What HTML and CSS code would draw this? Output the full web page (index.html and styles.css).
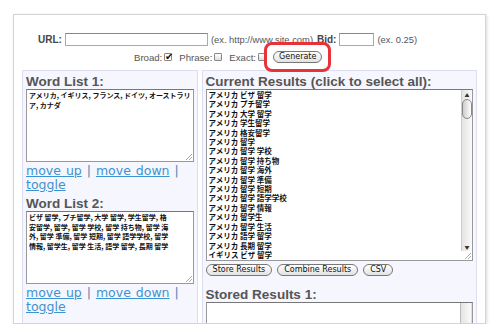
FILE: index.html
```html
<!DOCTYPE html>
<html lang="ja">
<head>
  <meta charset="UTF-8">
  <title>Keyword Generator</title>
  <link rel="stylesheet" href="styles.css">
</head>
<body>
  <div class="card">
    <!-- Formulario superior -->
    <div class="form">
      <div class="row row-url">
        <label class="strong">URL:</label>
        <span class="field field-url"></span>
        <span class="hint">(ex. http://www.site.com)</span>
        <label class="strong bid">Bid:</label>
        <span class="field field-bid"></span>
        <span class="hint">(ex. 0.25)</span>
      </div>
      <div class="row row-match">
        <span>Broad:</span><span class="check checked">&#10004;</span>
        <span>Phrase:</span><span class="check"></span>
        <span>Exact:</span><span class="check"></span>
        <span class="highlight"><button class="pill">Generate</button></span>
      </div>
    </div>

    <div class="columns">
      <!-- Listas de palabras -->
      <div class="panel panel-left">
        <h3>Word List 1:</h3>
        <div class="box words">アメリカ, イギリス, フランス, ドイツ, オーストラリ<br>ア, カナダ<span class="grip"></span></div>
        <div class="links"><a href="#">move up</a> | <a href="#">move down</a> | <a href="#">toggle</a></div>

        <h3>Word List 2:</h3>
        <div class="box words">ビザ 留学, プチ留学, 大学 留学, 学生留学, 格<br>安留学, 留学, 留学 学校, 留学 持ち物, 留学 海<br>外, 留学 準備, 留学 短期, 留学 語学学校, 留学<br>情報, 留学生, 留学 生活, 語学 留学, 長期 留学<span class="grip"></span></div>
        <div class="links"><a href="#">move up</a> | <a href="#">move down</a> | <a href="#">toggle</a></div>
      </div>

      <!-- Resultados -->
      <div class="panel panel-right">
        <h3>Current Results (click to select all):</h3>
        <div class="box results">
          <div class="lines">
            <div>アメリカ ビザ 留学</div>
            <div>アメリカ プチ留学</div>
            <div>アメリカ 大学 留学</div>
            <div>アメリカ 学生留学</div>
            <div>アメリカ 格安留学</div>
            <div>アメリカ 留学</div>
            <div>アメリカ 留学 学校</div>
            <div>アメリカ 留学 持ち物</div>
            <div>アメリカ 留学 海外</div>
            <div>アメリカ 留学 準備</div>
            <div>アメリカ 留学 短期</div>
            <div>アメリカ 留学 語学学校</div>
            <div>アメリカ 留学 情報</div>
            <div>アメリカ 留学生</div>
            <div>アメリカ 留学 生活</div>
            <div>アメリカ 語学 留学</div>
            <div>アメリカ 長期 留学</div>
            <div>イギリス ビザ 留学</div>
          </div>
          <div class="scrollbar">
            <span class="arrow">&#9650;</span>
            <span class="thumb"></span>
            <span class="track"></span>
            <span class="arrow">&#9660;</span>
          </div>
          <span class="grip"></span>
        </div>
        <div class="buttons">
          <button class="pill">Store Results</button>
          <button class="pill">Combine Results</button>
          <button class="pill">CSV</button>
        </div>

        <h3 class="stored">Stored Results 1:</h3>
        <div class="box stored-box">
          <div class="lines"></div>
          <div class="scrollbar empty"></div>
        </div>
      </div>
    </div>
  </div>
</body>
</html>
```

FILE: styles.css
```css
/* Estilo general */
body {
  margin: 0;
  padding: 0;
  background: #fff;
  font-family: 'Liberation Sans', Arial, sans-serif;
  color: #333;
}

.card {
  margin: 14px 0 0 13px;
  width: 471px;
  height: 308px;
  border: 1px solid #d4d4d4;
  box-shadow: 1px 1px 3px rgba(0, 0, 0, 0.15);
  display: flex;
  flex-direction: column;
  overflow: hidden;
}

/* Formulario */
.form {
  flex-shrink: 0;
  padding-top: 17px;
  height: 38px;
}

.row {
  display: flex;
  align-items: center;
}

.row-url {
  padding-left: 24px;
  height: 14px;
}

.strong {
  font-weight: bold;
  color: #444;
  font-size: 10px;
  margin-right: 3px;
}

.bid {
  margin-left: 1px;
}

.field {
  height: 11px;
  border: 1px solid #aaa;
  border-top-color: #888;
  background: #fff;
  margin-right: 3px;
}

.field-url {
  width: 141px;
}

.field-bid {
  width: 33px;
}

.hint {
  color: #555;
  font-size: 9.4px;
  margin-right: 3px;
}

.row-match {
  padding-left: 120px;
  margin-top: 4px;
  height: 14px;
  color: #555;
  font-size: 9.6px;
}

.check {
  display: inline-block;
  width: 6px;
  height: 6px;
  border: 1px solid #888;
  border-radius: 1px;
  margin: 0 7px 0 2px;
  font-size: 10px;
  line-height: 5px;
  color: #111;
  text-align: center;
  background: linear-gradient(#fff, #ddd);
}

.check.checked {
  background: #fff;
}

/* Marco rojo alrededor del botón */
.highlight {
  position: relative;
  display: flex;
}

.highlight::after {
  content: "";
  position: absolute;
  left: -9px;
  right: -9px;
  top: -9px;
  bottom: -9px;
  border: 3px solid #e8323a;
  border-radius: 8px;
}

.pill {
  font-family: 'DejaVu Sans', Verdana, sans-serif;
  font-size: 8px;
  color: #111;
  background: linear-gradient(#fff, #e2e2e2);
  border: 1px solid #777;
  border-radius: 7px;
  padding: 0 5px;
  height: 12px;
  line-height: 10px;
}

/* Columnas */
.columns {
  flex: 1;
  min-height: 0;
  display: flex;
  gap: 4px;
  padding: 0 8px;
}

.panel {
  background: #f6f6fe;
  border: 1px solid #dcdcf2;
  border-bottom: none;
  padding: 3px 3px 0 3px;
}

.panel-left {
  width: 168px;
}

.panel-right {
  width: 268px;
}

h3 {
  margin: 0;
  font-family: 'Liberation Sans', Arial, sans-serif;
  font-size: 13.5px;
  color: #555;
  line-height: 15px;
}

.box {
  position: relative;
  background: #fff;
  border: 1px solid #999;
  border-top-color: #777;
  font-family: 'Noto Sans CJK JP', sans-serif;
  font-size: 7.5px;
  color: #111;
}

.words {
  height: 70px;
  padding: 1px 1px 0 2px;
  font-size: 7px;
  line-height: 9.6px;
  font-weight: bold;
  white-space: nowrap;
  overflow: hidden;
}

.grip {
  position: absolute;
  right: 1px;
  bottom: 1px;
  width: 6px;
  height: 6px;
  background: linear-gradient(135deg, transparent 45%, #aaa 45%, #aaa 55%, transparent 55%, transparent 70%, #aaa 70%, #aaa 80%, transparent 80%);
}

.links {
  font-family: 'DejaVu Sans', Verdana, sans-serif;
  font-size: 12.5px;
  line-height: 14px;
  color: #4a85b8;
  margin: 2px 0 4px 0;
  word-spacing: 1px;
}

.links a {
  color: #3d93d0;
}

/* Resultados */
.results {
  height: 170px;
  display: flex;
}

.lines {
  flex: 1;
  padding: 0 2px;
  line-height: 9.4px;
  font-weight: bold;
  overflow: hidden;
}

.scrollbar {
  width: 10px;
  display: flex;
  flex-direction: column;
  align-items: center;
  border-left: 1px solid #ccc;
  background: linear-gradient(90deg, #e4e4e4, #fafafa);
  margin-bottom: 9px;
}

.scrollbar .arrow {
  font-size: 5px;
  line-height: 9px;
  color: #333;
}

.scrollbar .thumb {
  width: 8px;
  height: 18px;
  border: 1px solid #888;
  border-radius: 5px;
  background: linear-gradient(90deg, #ccc, #fff);
}

.scrollbar .track {
  flex: 1;
}

.buttons {
  display: flex;
  gap: 5px;
  margin-top: 3px;
}

.buttons .pill {
  padding: 0 6px;
}

.stored {
  margin-top: 11px;
}

.stored-box {
  height: 40px;
  display: flex;
}

.scrollbar.empty {
  margin: 0;
  border-left: 1px solid #bbb;
  border-right: 1px solid #ddd;
}
```
